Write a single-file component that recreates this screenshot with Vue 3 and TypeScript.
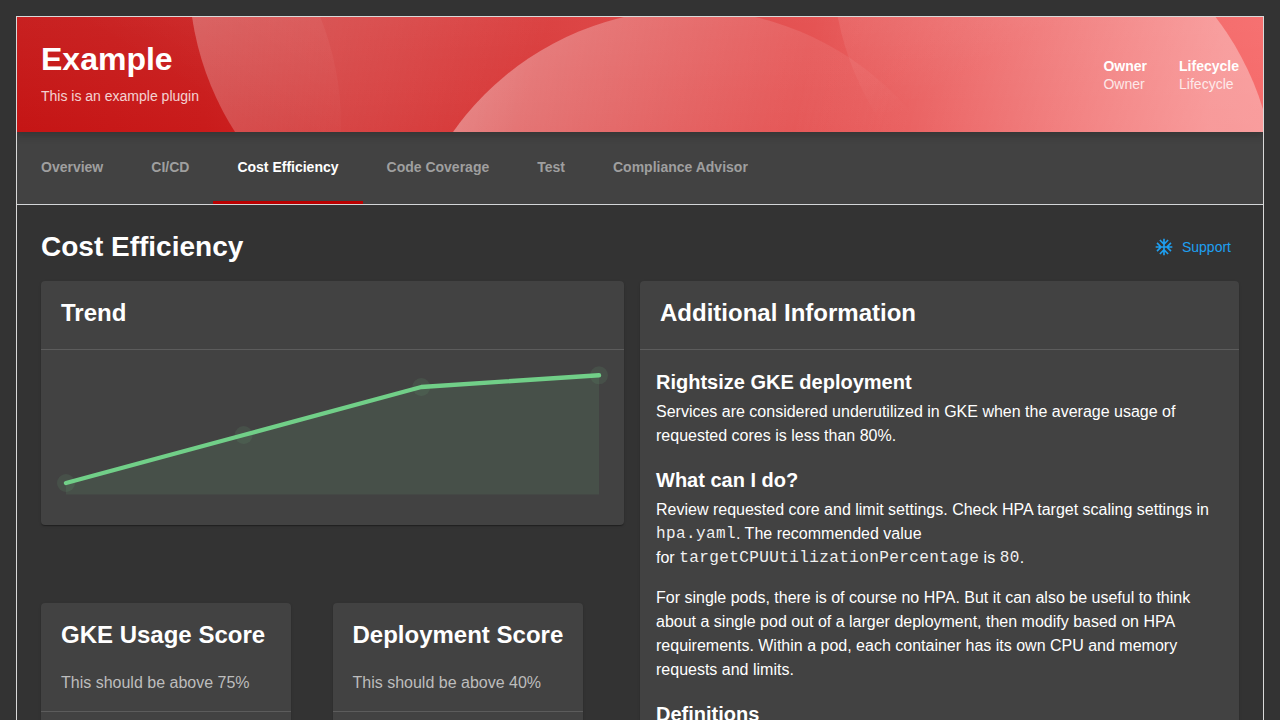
<script setup lang="ts">
interface Score {
  title: string
  hint: string
}

const tabs: string[] = ['Overview', 'CI/CD', 'Cost Efficiency', 'Code Coverage', 'Test', 'Compliance Advisor']
const activeTab = 'Cost Efficiency'

const labels: string[] = ['Owner', 'Lifecycle']

const scores: Score[] = [
  { title: 'GKE Usage Score', hint: 'This should be above 75%' },
  { title: 'Deployment Score', hint: 'This should be above 40%' },
]

const points: [number, number][] = [
  [25, 133],
  [202.7, 85],
  [380.3, 37],
  [558, 25.3],
]
const line = points.map((p) => p.join(',')).join(' ')
const area = `${line} 558,144.5 25,144.5`
</script>

<template>
  <div class="viewport">
    <div class="page">
      <header class="hero">
        <svg class="waves" viewBox="17 17 1246 115" preserveAspectRatio="none" aria-hidden="true">
          <defs>
            <linearGradient id="base" gradientUnits="userSpaceOnUse" x1="17" y1="75" x2="1263" y2="75">
              <stop offset="0" stop-color="#c51515" />
              <stop offset=".15" stop-color="#c91b1b" />
              <stop offset=".3" stop-color="#d32e2e" />
              <stop offset=".5" stop-color="#dd4040" />
              <stop offset="1" stop-color="#f66a6a" />
            </linearGradient>
            <linearGradient id="sheen" x1="0" y1="0" x2="0" y2="1">
              <stop offset="0" stop-color="#fff" stop-opacity=".05" />
              <stop offset="1" stop-color="#fff" stop-opacity="0" />
            </linearGradient>
            <linearGradient id="ga" gradientUnits="userSpaceOnUse" x1="192" y1="17" x2="520" y2="120">
              <stop offset="0" stop-color="#fff" stop-opacity=".27" />
              <stop offset="1" stop-color="#fff" stop-opacity="0" />
            </linearGradient>
            <linearGradient id="gb" gradientUnits="userSpaceOnUse" x1="320" y1="10" x2="250" y2="125">
              <stop offset="0" stop-color="#fff" stop-opacity=".05" />
              <stop offset="1" stop-color="#fff" stop-opacity="0" />
            </linearGradient>
            <linearGradient id="gc" gradientUnits="userSpaceOnUse" x1="470" y1="90" x2="880" y2="220">
              <stop offset="0" stop-color="#fff" stop-opacity=".36" />
              <stop offset=".68" stop-color="#fff" stop-opacity=".1" />
              <stop offset="1" stop-color="#fff" stop-opacity="0" />
            </linearGradient>
            <linearGradient id="ge" gradientUnits="userSpaceOnUse" x1="838" y1="0" x2="900" y2="110">
              <stop offset="0" stop-color="#fff" stop-opacity=".1" />
              <stop offset="1" stop-color="#fff" stop-opacity="0" />
            </linearGradient>
            <linearGradient id="gf" gradientUnits="userSpaceOnUse" x1="1230" y1="20" x2="830" y2="-60">
              <stop offset="0" stop-color="#fff" stop-opacity=".34" />
              <stop offset="1" stop-color="#fff" stop-opacity="0" />
            </linearGradient>
          </defs>
          <rect x="17" y="17" width="1246" height="115" fill="url(#base)" />
          <rect x="17" y="17" width="1246" height="115" fill="url(#sheen)" />
          <circle cx="51.5" cy="124.5" r="289.5" fill="url(#gb)" />
          <circle cx="478.6" cy="-24.5" r="289.5" fill="url(#ga)" />
          <circle cx="689.5" cy="299" r="289.5" fill="url(#gc)" />
          <circle cx="1122" cy="-38" r="289.5" fill="url(#ge)" />
          <circle cx="986" cy="193.4" r="289.5" fill="url(#gf)" />
        </svg>
        <div class="hero-text">
          <h1>Example</h1>
          <p>This is an example plugin</p>
        </div>
        <dl v-for="label in labels" :key="label" class="label">
          <dt>{{ label }}</dt>
          <dd>{{ label }}</dd>
        </dl>
      </header>

      <nav class="tabs">
        <a v-for="tab in tabs" :key="tab" class="tab" :class="{ active: tab === activeTab }">{{ tab }}</a>
      </nav>

      <main class="content">
        <div class="content-head">
          <h2>Cost Efficiency</h2>
          <button class="support" type="button">
            <svg width="20" height="20" viewBox="0 0 24 24" aria-hidden="true">
              <path
                fill="currentColor"
                d="M22 11h-4.17l3.24-3.24-1.41-1.42L15 11h-2V9l4.66-4.66-1.42-1.41L13 6.17V2h-2v4.17L7.76 2.93 6.34 4.34 11 9v2H9L4.34 6.34 2.93 7.76 6.17 11H2v2h4.17l-3.24 3.24 1.41 1.42L9 13h2v2l-4.66 4.66 1.42 1.41L11 17.83V22h2v-4.17l3.24 3.24 1.42-1.41L13 15v-2h2l4.66 4.66 1.41-1.42L17.83 13H22z"
              />
            </svg>
            <span>Support</span>
          </button>
        </div>

        <div class="columns">
          <div class="left">
            <section class="card trend">
              <div class="card-head"><h3>Trend</h3></div>
              <svg class="chart" width="583" height="175" viewBox="0 0 583 175" aria-hidden="true">
                <polygon :points="area" fill="#71cf88" fill-opacity=".1" />
                <circle v-for="p in points" :key="p[0]" :cx="p[0]" :cy="p[1]" r="9" fill="#71cf88" fill-opacity=".1" />
                <polyline :points="line" fill="none" stroke="#71cf88" stroke-width="4.4" stroke-linecap="round" stroke-linejoin="round" />
              </svg>
            </section>
            <div class="scores">
              <section v-for="score in scores" :key="score.title" class="card score">
                <div class="card-head">
                  <h3>{{ score.title }}</h3>
                  <p>{{ score.hint }}</p>
                </div>
              </section>
            </div>
          </div>

          <section class="card info">
            <div class="card-head"><h3>Additional Information</h3></div>
            <div class="info-body">
              <h4>Rightsize GKE deployment</h4>
              <p>Services are considered underutilized in GKE when the average usage of requested cores is less than 80%.</p>
              <h4>What can I do?</h4>
              <p>
                Review requested core and limit settings. Check HPA target scaling settings in
                <code>hpa.yaml</code>. The recommended value for&nbsp;<code>targetCPUUtilizationPercentage</code> is <code>80</code>.
              </p>
              <p>
                For single pods, there is of course no HPA. But it can also be useful to think about a single pod out of
                a larger deployment, then modify based on HPA requirements. Within a pod, each container has its own CPU
                and memory requests and limits.
              </p>
              <h4>Definitions</h4>
            </div>
          </section>
        </div>
      </main>
    </div>
  </div>
</template>

<style>
body {
  background: #333;
}
</style>

<style scoped>
.viewport {
  box-sizing: border-box;
  height: 720px;
  padding: 16px 16px 0;
  overflow: hidden;
  background: #333;
  color: #fff;
  font-family: 'Liberation Sans', Arial, sans-serif;
}

h1,
h2,
h3,
h4,
p,
dl,
dd {
  margin: 0;
}

.page {
  box-sizing: border-box;
  height: 1000px;
  overflow: hidden;
  border: 1px solid #d9d9d9;
}

.hero {
  position: relative;
  z-index: 1;
  box-sizing: border-box;
  display: flex;
  align-items: center;
  gap: 32px;
  height: 115px;
  padding: 0 24px;
  box-shadow: 0 0 8px 3px rgba(20, 20, 20, 0.3);
}

.waves {
  position: absolute;
  inset: 0;
  width: 100%;
  height: 100%;
}

.hero-text {
  position: relative;
  flex: 1;
  padding-bottom: 6px;
}

.hero-text h1 {
  margin-bottom: 6px;
  font-size: 32px;
  line-height: 42px;
}

.hero-text p {
  font-size: 14px;
  line-height: 20px;
  opacity: 0.8;
}

.label {
  position: relative;
  font-size: 14px;
  line-height: 18px;
}

.label dt {
  font-weight: 700;
}

.label dd {
  opacity: 0.8;
}

.tabs {
  display: flex;
  height: 72px;
  background: #424242;
  border-bottom: 1px solid #d3d6d8;
}

.tab {
  box-sizing: border-box;
  height: 72px;
  padding: 26px 24px 0;
  color: #9f9f9f;
  border-bottom: 3px solid transparent;
  font-size: 14px;
  font-weight: 700;
  line-height: 18px;
}

.tab.active {
  color: #fff;
  border-bottom-color: #ba0000;
}

.content {
  padding: 24px;
}

.content-head {
  display: flex;
  justify-content: space-between;
  height: 52px;
}

.content-head h2 {
  font-size: 28px;
  line-height: 36px;
}

.support {
  display: flex;
  align-items: center;
  gap: 8px;
  height: 36px;
  padding: 0 8px;
  border: 0;
  background: none;
  color: #1ea0f2;
  font: 14px 'Liberation Sans', Arial, sans-serif;
}

.columns {
  display: grid;
  grid-template-columns: 583px 599px;
  gap: 16px;
}

.card {
  background: #424242;
  border-radius: 4px;
  box-shadow:
    0 2px 1px -1px rgba(0, 0, 0, 0.2),
    0 1px 1px 0 rgba(0, 0, 0, 0.14),
    0 1px 3px 0 rgba(0, 0, 0, 0.12);
}

.card-head {
  padding: 16px 20px 20px;
  border-bottom: 1px solid #5c5c5c;
}

.card-head h3 {
  font-size: 24px;
  line-height: 32px;
  white-space: nowrap;
}

.card-head p {
  margin-top: 20px;
  color: #bdbdbd;
  font-size: 16px;
  line-height: 24px;
}

.trend .card-head,
.info .card-head {
  box-sizing: border-box;
  height: 69px;
}

.score .card-head {
  box-sizing: border-box;
  height: 109px;
}

.trend {
  height: 244px;
}

.chart {
  display: block;
}

.scores {
  display: flex;
  gap: 41.5px;
  margin-top: 78px;
}

.score {
  width: 250px;
  height: 300px;
}

.info {
  height: 700px;
}

.info-body {
  padding: 16px;
  font-size: 16px;
  line-height: 24px;
}

.info-body h4 {
  padding: 1px 0 3px;
  font-size: 20px;
  line-height: 30px;
}

.info-body p {
  margin-bottom: 16px;
}

.info-body code {
  color: #f0f0f0;
  font-family: 'Liberation Mono', monospace;
  font-size: 16px;
  letter-spacing: 0.4px;
  line-height: 20px;
  vertical-align: 1px;
}
</style>
